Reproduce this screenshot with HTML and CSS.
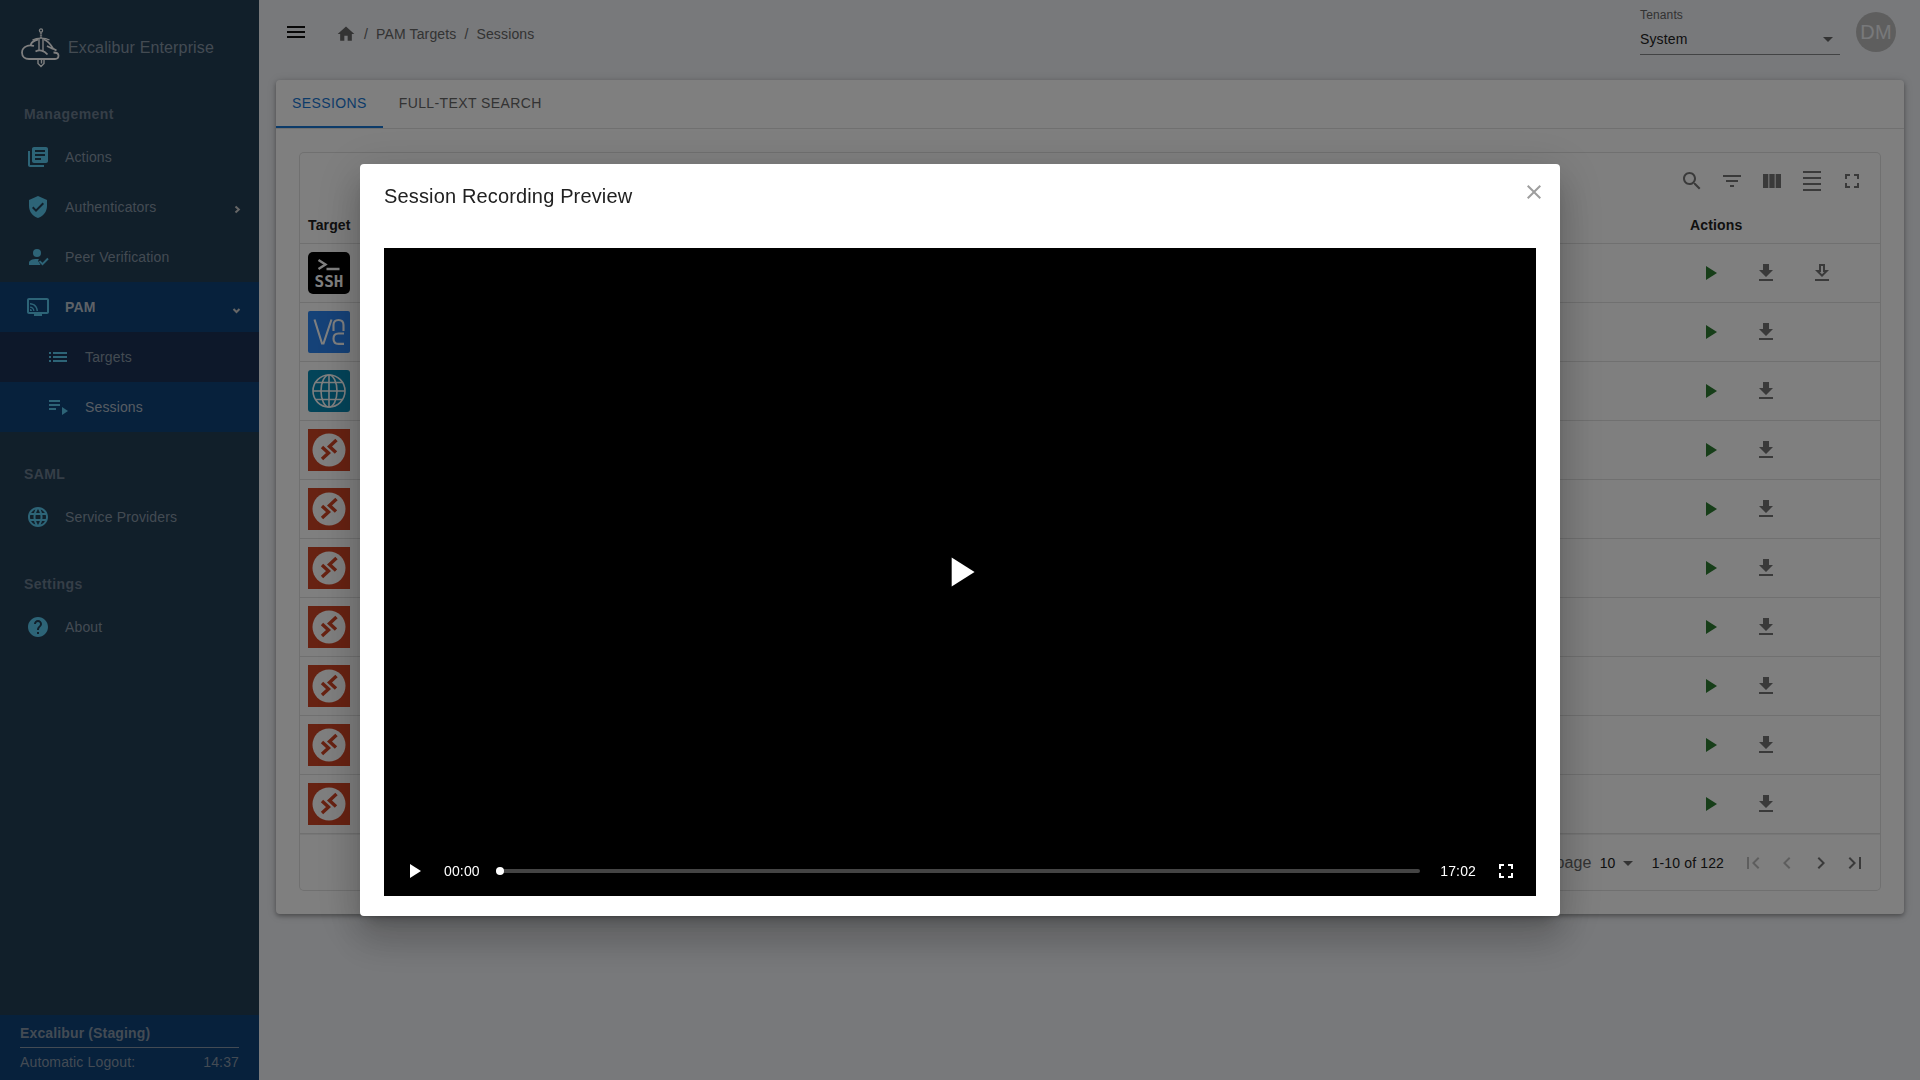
FILE: index.html
```html
<!DOCTYPE html>
<html lang="en">
<head>
<meta charset="utf-8">
<title>Excalibur Enterprise - Sessions</title>
<link rel="stylesheet" href="styles.css">
</head>
<body>
<svg class="defs" aria-hidden="true">
  <symbol id="play" viewBox="0 0 24 24"><path d="M8 5v14l11-7z"/></symbol>
  <symbol id="download" viewBox="0 0 24 24"><path d="M19 9h-4V3H9v6H5l7 7 7-7zM5 18v2h14v-2H5z"/></symbol>
  <symbol id="download-outline" viewBox="0 0 24 24"><path d="M19 9h-4V3H9v6H5l7 7 7-7zm-8 2V5h2v6h1.170L12 13.170 9.830 11H11zm-6 7h14v2H5z"/></symbol>
  <symbol id="fullscreen" viewBox="0 0 24 24"><path d="M7 14H5v5h5v-2H7v-3zm-2-4h2V7h3V5H5v5zm12 7h-3v2h5v-5h-2v3zM14 5v2h3v3h2V5h-5z"/></symbol>
  <symbol id="dropdown" viewBox="0 0 24 24"><path d="M7 10l5 5 5-5z"/></symbol>
  <symbol id="rdp" viewBox="0 0 42 42"><path fill="#cf4424" d="M0 0h42v42H0z"/><circle cx="21" cy="21" r="16.500" fill="#fff"/><path fill="none" stroke="#cf4424" stroke-width="3.400" d="M14 18.500l6.500 6-6.500 6M28.500 11.500L21.500 18l6.500 6" transform="translate(0 -.5)"/></symbol>
</svg>
<div class="app">
  <aside class="sidebar">
    <a class="brand" href="#">
      <svg class="brand-logo" viewBox="0 0 40 40" fill="none" stroke="#fff">
        <path stroke-width="1.800" d="M14 18C11 17 9 17 7 18 3 19.500 2 22 2 24.500 2 28.500 5 31 9 31H35C37.500 31 38.500 29 38.500 27.500 38.500 25 36.500 24.500 33.500 24.500M10.500 17C12 13.500 15 12 18 11.500M24 11.500C28 13 31 17 33 20.500l3.500 2M27 18l6 3M15.500 23.500C19 21.500 24 22 27.500 26.500"/>
        <path d="M19 11v12M23 11v12M12.500 12C17 9.500 25 9.500 29.500 12" stroke-width="1.400"/>
        <circle cx="21" cy="2.500" r="1.600" stroke-width="1.200"/><path d="M21 4.500v6" stroke-width="2.200" stroke-dasharray="1.200 .8"/>
        <path d="M18 31.500V35.500l3 3 3-3v-4M21.500 31.500v4" stroke-width="1.400"/>
      </svg>
      <span>Excalibur Enterprise</span>
    </a>
    <nav class="nav">
      <h2 class="nav-title">Management</h2>
      <a class="nav-item" href="#"><svg class="icon" viewBox="0 0 24 24"><path d="M4 6H2v14c0 1.100.9 2 2 2h14v-2H4V6zm16-4H8c-1.100 0-2 .9-2 2v12c0 1.100.9 2 2 2h12c1.100 0 2-.9 2-2V4c0-1.100-.9-2-2-2zm-1 9H9V9h10v2zm-4 4H9v-2h6v2zm4-8H9V5h10v2z"/></svg>Actions</a>
      <a class="nav-item" href="#"><svg class="icon" viewBox="0 0 24 24"><path d="M12 1L3 5v6c0 5.550 3.840 10.740 9 12 5.160-1.260 9-6.450 9-12V5l-9-4zm-2 16l-4-4 1.410-1.410L10 14.170l6.590-6.590L18 9l-8 8z"/></svg>Authenticators<svg class="caret" viewBox="0 0 10 10"><path d="M4.500 2.500L7.800 5.500 4.500 8.500"/></svg></a>
      <a class="nav-item" href="#"><svg class="icon" viewBox="0 0 24 24"><circle cx="11" cy="8" r="4"/><path d="M3 20v-2c0-2.500 3-4 8-4 1 0 1.500.1 2 .2-1 1-1 2-.2 2.800L14.500 20zM16.500 20.500L12.800 16.800l1.400-1.400 2.300 2.300 4.800-4.900 1.400 1.400z"/></svg>Peer Verification</a>
      <a class="nav-item active parent" href="#"><svg class="icon" viewBox="0 0 24 24"><path d="M21 3H3c-1.100 0-2 .9-2 2v12c0 1.100.9 2 2 2h5v2h8v-2h5c1.100 0 2-.9 2-2V5c0-1.100-.9-2-2-2zm0 14H3V5h18v12z"/><path d="M4 14v2h2c0-1.110-.89-2-2-2zm0-2.500v1.250c1.790 0 3.250 1.460 3.250 3.250H8.500c0-2.490-2.010-4.500-4.500-4.500zM4 8v1.500c3.590 0 6.500 2.910 6.500 6.500H12c0-4.420-3.580-8-8-8z"/></svg>PAM<svg class="caret" viewBox="0 0 10 10"><path d="M2.500 5L5.500 8l3-3"/></svg></a>
      <a class="nav-item sub" href="#"><svg class="icon" viewBox="0 0 24 24"><path d="M3 13h2v-2H3v2zm0 4h2v-2H3v2zm0-8h2V7H3v2zm4 4h14v-2H7v2zm0 4h14v-2H7v2zM7 7v2h14V7H7z"/></svg>Targets</a>
      <a class="nav-item sub active" href="#"><svg class="icon" viewBox="0 0 24 24"><path d="M3 9h11v2H3zM3 5h11v2H3zM3 13h7v2H3zM16 12v8l6-4z"/></svg>Sessions</a>
      <h2 class="nav-title">SAML</h2>
      <a class="nav-item" href="#"><svg class="icon" viewBox="0 0 24 24"><path d="M11.990 2C6.470 2 2 6.480 2 12s4.470 10 9.990 10C17.520 22 22 17.520 22 12S17.520 2 11.990 2zm6.930 6h-2.950c-.32-1.250-.78-2.450-1.380-3.560 1.840.63 3.370 1.910 4.330 3.560zM12 4.040c.83 1.200 1.480 2.530 1.910 3.960h-3.820c.43-1.430 1.080-2.760 1.910-3.960zM4.260 14C4.100 13.360 4 12.690 4 12s.1-1.360.26-2h3.380c-.08.66-.14 1.320-.14 2 0 .68.06 1.340.14 2H4.260zm.82 2h2.950c.32 1.250.78 2.450 1.380 3.560-1.840-.63-3.370-1.900-4.330-3.560zm2.950-8H5.080c.96-1.660 2.490-2.930 4.330-3.560C8.810 5.550 8.350 6.750 8.030 8zM12 19.960c-.83-1.200-1.480-2.530-1.910-3.960h3.820c-.43 1.430-1.080 2.760-1.910 3.960zM14.340 14H9.660c-.09-.66-.16-1.320-.16-2 0-.68.07-1.350.16-2h4.680c.09.65.16 1.320.16 2 0 .68-.07 1.340-.16 2zm.25 5.560c.6-1.110 1.060-2.310 1.380-3.560h2.950c-.96 1.650-2.490 2.930-4.330 3.560zM16.360 14c.08-.66.14-1.320.14-2 0-.68-.06-1.340-.14-2h3.380c.16.64.26 1.310.26 2s-.1 1.360-.26 2h-3.380z"/></svg>Service Providers</a>
      <h2 class="nav-title">Settings</h2>
      <a class="nav-item" href="#"><svg class="icon" viewBox="0 0 24 24"><path d="M12 2C6.480 2 2 6.480 2 12s4.480 10 10 10 10-4.480 10-10S17.520 2 12 2zm1 17h-2v-2h2v2zm2.070-7.750l-.9.920C13.450 12.900 13 13.500 13 15h-2v-.5c0-1.100.45-2.100 1.170-2.830l1.240-1.260c.37-.36.590-.86.590-1.410 0-1.100-.9-2-2-2s-2 .9-2 2H8c0-2.210 1.790-4 4-4s4 1.790 4 4c0 .88-.36 1.680-.93 2.250z"/></svg>About</a>
    </nav>
    <footer class="status">
      <strong>Excalibur (Staging)</strong>
      <p class="logout"><span>Automatic Logout:</span><span>14:37</span></p>
    </footer>
  </aside>

  <div class="content">
    <header class="topbar">
      <button class="icon-button menu" aria-label="Menu"><svg class="icon" viewBox="0 0 24 24"><path d="M3 18h18v-2H3v2zm0-5h18v-2H3v2zm0-7v2h18V6H3z"/></svg></button>
      <nav class="crumbs" aria-label="Breadcrumb">
        <a class="home" href="#" aria-label="Home"><svg viewBox="0 0 24 24"><path d="M10 20v-6h4v6h5v-8h3L12 3 2 12h3v8z"/></svg></a>
        <span>/</span><a href="#">PAM Targets</a><span>/</span><a href="#">Sessions</a>
      </nav>
      <div class="tenant">
        <label for="tenant">Tenants</label>
        <div class="select-wrap">
          <select id="tenant"><option>System</option></select>
          <svg class="icon arrow"><use href="#dropdown"/></svg>
        </div>
      </div>
      <button class="avatar">DM</button>
    </header>

    <main class="card">
      <div class="tabs" role="tablist">
        <button class="tab selected" role="tab" aria-selected="true">SESSIONS</button>
        <button class="tab" role="tab" aria-selected="false">FULL-TEXT SEARCH</button>
      </div>
      <div class="card-body">
        <section class="grid">
          <div class="toolbar">
            <button class="icon-button" aria-label="Search"><svg class="icon" viewBox="0 0 24 24"><path d="M15.500 14h-.79l-.28-.27C15.410 12.590 16 11.110 16 9.500 16 5.910 13.090 3 9.500 3S3 5.910 3 9.500 5.910 16 9.500 16c1.610 0 3.090-.59 4.230-1.570l.27.28v.79l5 4.990L20.490 19l-4.990-5zm-6 0C7.010 14 5 11.990 5 9.500S7.010 5 9.500 5 14 7.010 14 9.500 11.990 14 9.500 14z"/></svg></button>
            <button class="icon-button" aria-label="Filters"><svg class="icon" viewBox="0 0 24 24"><path d="M10 18h4v-2h-4v2zM3 6v2h18V6H3zm3 7h12v-2H6v2z"/></svg></button>
            <button class="icon-button" aria-label="Columns"><svg class="icon" viewBox="0 0 24 24"><path d="M14.670 5v14H9.330V5h5.340zm1 14H21V5h-5.330v14zm-7.340 0V5H3v14h5.330z"/></svg></button>
            <button class="icon-button" aria-label="Density"><svg class="icon" viewBox="0 0 24 24"><path d="M3 2h18v2H3zm0 18h18v2H3zm0-6h18v2H3zm0-6h18v2H3z"/></svg></button>
            <button class="icon-button" aria-label="Full screen"><svg class="icon"><use href="#fullscreen"/></svg></button>
          </div>
          <table>
            <thead><tr><th>Target</th><th class="actions-col">Actions</th></tr></thead>
            <tbody id="rows">
              <tr><td><svg class="target" viewBox="0 0 42 42"><rect width="42" height="42" rx="5"/><g fill="none" stroke="#fff" stroke-width="2.400"><path d="M10.500 8l7 4.500-7 4.500M18.500 17h13"/></g><text class="ssh" x="21" y="35" text-anchor="middle">SSH</text></svg></td>
                <td><div class="actions"><button class="icon-button go" aria-label="Play"><svg class="icon"><use href="#play"/></svg></button><button class="icon-button" aria-label="Download"><svg class="icon"><use href="#download"/></svg></button><button class="icon-button" aria-label="Download file"><svg class="icon"><use href="#download-outline"/></svg></button></div></td></tr>
              <tr><td><svg class="target" viewBox="0 0 42 42"><rect width="42" height="42" rx="2" fill="#2b84f0"/><g fill="none" stroke="#fff" stroke-width="2.100"><path d="M6.500 8.500L14 32.500h1.500L23.500 8.500M25.500 20v-6q0-5 5-5t5 5v6M36 22.500h-5.500q-5 0-5 5.200t5 5.200H36"/></g></svg></td>
                <td><div class="actions"><button class="icon-button go" aria-label="Play"><svg class="icon"><use href="#play"/></svg></button><button class="icon-button" aria-label="Download"><svg class="icon"><use href="#download"/></svg></button></div></td></tr>
              <tr><td><svg class="target" viewBox="0 0 42 42"><rect width="42" height="42" rx="3" fill="#0788b3"/><g fill="none" stroke="#fff" stroke-width="1.600"><circle cx="21" cy="21" r="16"/><ellipse cx="21" cy="21" rx="8" ry="16"/><path d="M21 5v32M5 21h32M8 12.500h26M8 29.500h26"/></g></svg></td>
                <td><div class="actions"><button class="icon-button go" aria-label="Play"><svg class="icon"><use href="#play"/></svg></button><button class="icon-button" aria-label="Download"><svg class="icon"><use href="#download"/></svg></button></div></td></tr>
            </tbody>
          </table>
          <div class="pager">
            <label for="per-page">Rows per page</label>
            <div class="page-size"><select id="per-page"><option>10</option></select><svg class="icon arrow"><use href="#dropdown"/></svg></div>
            <span class="range">1-10 of 122</span>
            <button class="page-button" disabled aria-label="First page"><svg class="icon" viewBox="0 0 24 24"><path d="M18.410 16.590L13.820 12l4.590-4.590L17 6l-6 6 6 6zM6 6h2v12H6z"/></svg></button>
            <button class="page-button" disabled aria-label="Previous page"><svg class="icon" viewBox="0 0 24 24"><path d="M15.410 7.410L14 6l-6 6 6 6 1.410-1.410L10.830 12z"/></svg></button>
            <button class="page-button" aria-label="Next page"><svg class="icon" viewBox="0 0 24 24"><path d="M10 6L8.590 7.410 13.170 12l-4.580 4.590L10 18l6-6z"/></svg></button>
            <button class="page-button" aria-label="Last page"><svg class="icon" viewBox="0 0 24 24"><path d="M5.590 7.410L10.180 12l-4.590 4.590L7 18l6-6-6-6zM16 6h2v12h-2z"/></svg></button>
          </div>
        </section>
      </div>
    </main>
  </div>
</div>

<div class="backdrop">
  <section class="dialog" role="dialog" aria-modal="true" aria-labelledby="dialog-title">
    <header class="dialog-head">
      <h1 id="dialog-title">Session Recording Preview</h1>
      <button class="icon-button close" aria-label="Close"><svg class="icon" viewBox="0 0 24 24"><path d="M19 6.410L17.590 5 12 10.590 6.410 5 5 6.410 10.590 12 5 17.590 6.410 19 12 13.410 17.590 19 19 17.590 13.410 12z"/></svg></button>
    </header>
    <div class="player">
      <button class="big-play" aria-label="Play recording"><svg viewBox="0 0 24 24"><use href="#play"/></svg></button>
      <div class="controls">
        <button class="icon-button" aria-label="Play"><svg class="icon"><use href="#play"/></svg></button>
        <span>00:00</span>
        <input class="seek" type="range" min="0" max="1022" value="0" aria-label="Seek">
        <span>17:02</span>
        <button class="icon-button" aria-label="Full screen"><svg class="icon"><use href="#fullscreen"/></svg></button>
      </div>
    </div>
  </section>
</div>
<script src="rows.js"></script>
</body>
</html>
```
FILE: rows.js
```
const row = `<tr><td><svg class="target"><use href="#rdp"/></svg></td>
<td><div class="actions"><button class="icon-button go" aria-label="Play"><svg class="icon"><use href="#play"/></svg></button><button class="icon-button" aria-label="Download"><svg class="icon"><use href="#download"/></svg></button></div></td></tr>`;
document.getElementById("rows").insertAdjacentHTML("beforeend", row.repeat(7));
```
FILE: styles.css
```css
* { box-sizing: border-box; }
body {
  margin: 0;
  background: #f0f2f6;
  color: #212121;
  font: 14px/20px "Liberation Sans", Arial, sans-serif;
  letter-spacing: 0.01em;
}
button, select, input { font: inherit; letter-spacing: inherit; color: inherit; margin: 0; }
button { border: 0; padding: 0; background: none; }
a { color: inherit; text-decoration: none; }
h1, h2, p { margin: 0; }
select { appearance: none; border: 0; background: none; padding: 0; }
.defs { position: absolute; width: 0; height: 0; }
.icon { display: block; flex: none; width: 24px; height: 24px; fill: currentColor; }
.icon-button { display: block; padding: 8px; color: #757575; }

.app { display: flex; min-height: 100vh; }

/* sidebar */
.sidebar {
  display: flex;
  flex-direction: column;
  flex: none;
  width: 259px;
  background: #223e55;
  color: #8796a5;
}
.brand {
  display: flex;
  align-items: center;
  gap: 8px;
  height: 96px;
  padding: 0 20px;
  font-size: 16px;
}
.brand-logo { width: 40px; height: 40px; }
.nav { flex: 1; }
.nav-title {
  height: 60px;
  padding: 32px 24px 8px;
  color: #6b7d8f;
  font-size: 14px;
  line-height: 20px;
  letter-spacing: 0.03em;
}
.nav-title:first-child { height: 36px; padding-top: 8px; }
.nav-item {
  display: flex;
  align-items: center;
  gap: 15px;
  height: 50px;
  padding: 0 18px 0 26px;
}
.nav-item .icon { fill: #5bc8ef; }
.nav-item.sub { padding-left: 46px; background: #1a3154; }
.nav-item.active { background: #0e4278; color: #adb9c6; }
.nav-item.parent { font-weight: bold; color: #bcc5cf; }
.caret { width: 10px; height: 10px; margin: 4px 0 0 auto; fill: none; stroke: #ccc; stroke-width: 2; }
.status { padding: 8px 20px; background: #0e4278; color: #8797a8; }
.status strong { display: block; padding-bottom: 4px; border-bottom: 1px solid #8797a8; }
.logout { display: flex; justify-content: space-between; padding-top: 4px; }

/* top bar */
.content { flex: 1; min-width: 0; padding: 0 16px 0 17px; }
.topbar { display: flex; align-items: center; height: 64px; padding-right: 8px; margin-bottom: 16px; }
.menu { color: #111; }
.crumbs { display: flex; align-items: center; gap: 8px; flex: 1; margin: 4px 0 0 20px; color: #666; }
.home svg { display: block; width: 20px; height: 20px; fill: #666; }
.tenant { width: 200px; margin: 0 16px 2px 0; }
.tenant label { display: block; color: #666; font-size: 12px; line-height: 16px; }
.select-wrap, .page-size { display: grid; align-items: center; }
.select-wrap > *, .page-size > * { grid-area: 1 / 1; }
.arrow { justify-self: end; pointer-events: none; fill: #666; }
.select-wrap { height: 32px; border-bottom: 1px solid #848689; }
.avatar { width: 40px; height: 40px; border-radius: 50%; background: #bdbdbd; color: #f0f2f6; font-size: 20px; }

/* card */
.card { background: #fff; border-radius: 4px; box-shadow: 0 2px 4px rgba(0, 0, 0, .3), 0 1px 10px rgba(0, 0, 0, .15); }
.tabs { display: flex; border-bottom: 1px solid #e0e0e0; }
.tab { height: 48px; padding: 0 16px 2px; color: #666; letter-spacing: 0.028em; }
.tab.selected { border-bottom: 2px solid #1976d2; padding-bottom: 0; color: #1976d2; }
.card-body { padding: 24px; }
.grid { border-radius: 4px; box-shadow: 0 0 0 1px #e0e0e0; }
.toolbar { display: flex; justify-content: flex-end; padding: 8px; }
table { width: 100%; border-collapse: separate; border-spacing: 0; }
th { height: 35px; padding: 0 8px 2px; text-align: left; border-bottom: 1px solid #e0e0e0; }
td { height: 59px; padding: 0 8px; border-bottom: 1px solid #e0e0e0; }
.actions-col { width: 198px; }
.actions { display: flex; gap: 16px; }
.go { color: #2e7d32; }
.target { display: block; width: 42px; height: 42px; }
.ssh { fill: #fff; font: bold 16px "DejaVu Sans Mono", monospace; letter-spacing: 0; }
.pager { display: flex; align-items: center; justify-content: flex-end; height: 56px; padding: 0 8px; border-top: 1px solid #eee; }
.pager label { margin-right: 8px; color: #666; font-size: 16px; }
.page-size { width: 40px; margin-right: 12px; }
.range { margin-right: 12px; }
.page-button { padding: 5px; color: #757575; }
.page-button:disabled { color: #bdbdbd; }

/* dialog */
.backdrop {
  position: fixed;
  inset: 0;
  display: flex;
  align-items: center;
  justify-content: center;
  background: rgba(0, 0, 0, .5);
}
.dialog {
  width: 100%;
  max-width: 1200px;
  padding: 0 24px 20px;
  background: #fff;
  border-radius: 4px;
  box-shadow: 0 11px 15px -7px rgba(0, 0, 0, .2), 0 24px 38px 3px rgba(0, 0, 0, .14), 0 9px 46px 8px rgba(0, 0, 0, .12);
}
.dialog-head { display: flex; justify-content: space-between; height: 84px; padding-top: 8px; }
.dialog-head h1 { padding-top: 8px; font-size: 20px; font-weight: normal; line-height: 32px; letter-spacing: 0.0075em; }
.close { align-self: flex-start; margin-right: -18px; color: #9e9e9e; }
.player { display: grid; aspect-ratio: 16 / 9; background: #000; color: #fff; }
.player > * { grid-area: 1 / 1; }
.player .icon-button { color: #fff; }
.big-play { place-self: center; }
.big-play svg { display: block; width: 50px; height: 50px; fill: #fff; }
.controls { display: flex; align-items: center; align-self: end; gap: 16px; height: 50px; padding: 0 10px; }
.controls .icon-button:first-child { margin-right: -6px; }
.controls .icon-button:last-child { margin-left: -6px; }
.seek { flex: 1; height: 16px; margin-right: 4px; appearance: none; background: none; }
.seek::-webkit-slider-runnable-track { height: 4px; border-radius: 2px; background: #444; }
.seek::-webkit-slider-thumb { appearance: none; width: 8px; height: 8px; margin-top: -2px; border-radius: 50%; background: #fff; }
```
